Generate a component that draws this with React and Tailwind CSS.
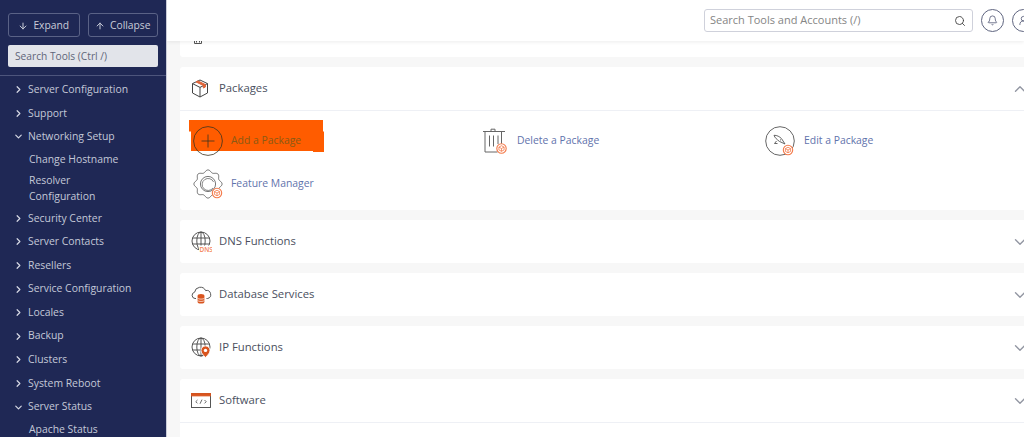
import React from "react";
import { ArrowDown, ArrowUp, ChevronRight, ChevronDown, ChevronUp, Search, Bell, UserRound } from "lucide-react";

const font = { fontFamily: '"Open Sans", sans-serif' };

const navItems = [
  { label: "Server Configuration" },
  { label: "Support" },
  { label: "Networking Setup", open: true, children: ["Change Hostname", "Resolver Configuration"] },
  { label: "Security Center" },
  { label: "Server Contacts" },
  { label: "Resellers" },
  { label: "Service Configuration" },
  { label: "Locales" },
  { label: "Backup" },
  { label: "Clusters" },
  { label: "System Reboot" },
  { label: "Server Status", open: true, children: ["Apache Status"] },
];

// wavy outline for the gear icon
const gearPath =
  Array.from({ length: 97 }, (_, i) => {
    const angle = (i / 96) * Math.PI * 2;
    const radius = 12.9 + 1.2 * Math.cos(angle * 8);
    const x = 15 + radius * Math.cos(angle);
    const y = 15 + radius * Math.sin(angle);
    return `${i === 0 ? "M" : "L"}${x.toFixed(2)} ${y.toFixed(2)}`;
  }).join(" ") + "Z";

function Badge({ x = 22, y = 22 }) {
  return (
    <g transform={`translate(${x} ${y})`} stroke="#f47a4a" fill="#fff" strokeWidth="1.1">
      <circle r="4.7" />
      <path d="M-2.6 -1.4 0 -2.8 2.6 -1.4V1.4L0 2.8-2.6 1.4ZM-2.6 -1.4 0 0 2.6 -1.4M0 0V2.8" fill="none" strokeWidth="0.8" />
    </g>
  );
}

function BoxIcon() {
  return (
    <svg width="18" height="19" viewBox="0 0 18 19" fill="none" stroke="#444" strokeWidth="1">
      <path d="M9 1 16.5 4.6V14L9 18 1.5 14V4.6Z" />
      <path d="M1.5 4.6 9 8.4 16.5 4.6M9 8.4V18" />
      <path d="M5 2.9 12.4 6.6V9L14.4 8V5.6L7 1.9Z" fill="#e0653a" stroke="#e0653a" />
    </svg>
  );
}

function GlobeLines() {
  return (
    <>
      <circle cx="10" cy="10" r="9" />
      <ellipse cx="10" cy="10" rx="4.2" ry="9" />
      <path d="M10 1V19M1.4 7H18.6M1.4 13H18.6" />
    </>
  );
}

function DnsIcon() {
  return (
    <svg width="21" height="21" viewBox="0 0 21 21" fill="none" stroke="#444" strokeWidth="0.9">
      <GlobeLines />
      <rect x="8" y="14.5" width="13" height="6.5" fill="#fff" stroke="none" />
      <text x="8.5" y="20.5" fontSize="6.5" fontWeight="600" fill="#f4845a" stroke="none" style={font}>DNS</text>
    </svg>
  );
}

function DatabaseIcon() {
  return (
    <svg width="21" height="19" viewBox="0 0 21 19" fill="none" stroke="#444" strokeWidth="0.9">
      <path d="M5 13.5H4A3.2 3.2 0 0 1 3.6 7.2 5.8 5.8 0 0 1 14.6 5.6 4 4 0 0 1 16.6 13.5H15.5" />
      <ellipse cx="10" cy="10.5" rx="3.4" ry="1.6" fill="#d9541e" stroke="none" />
      <path d="M6.6 11V17C6.6 18 8 18.6 10 18.6S13.4 18 13.4 17V11Z" fill="#d9541e" stroke="none" />
      <path d="M6.6 13.3C7.5 14.4 12.5 14.4 13.4 13.3M6.6 15.6C7.5 16.7 12.5 16.7 13.4 15.6" stroke="#fff" strokeWidth="0.7" />
    </svg>
  );
}

function IpIcon() {
  return (
    <svg width="21" height="21" viewBox="0 0 21 21" fill="none" stroke="#444" strokeWidth="0.9">
      <GlobeLines />
      <path d="M14.5 20.5C12 17.8 10 16 10 13.4A4.5 4.5 0 0 1 19 13.4C19 16 17 17.8 14.5 20.5Z" fill="#d9541e" stroke="#fff" />
      <circle cx="14.5" cy="13.4" r="1.7" fill="#fff" stroke="none" />
    </svg>
  );
}

function SoftwareIcon() {
  return (
    <svg width="20" height="15" viewBox="0 0 20 15" fill="none" stroke="#444" strokeWidth="0.9">
      <rect x="0.5" y="0.5" width="19" height="14" />
      <rect x="0.5" y="0.5" width="19" height="2.4" fill="#d9541e" stroke="#d9541e" />
      <path d="M6.5 7 4.8 8.7 6.5 10.4M13.5 7 15.2 8.7 13.5 10.4M11 6.6 9 10.8" strokeWidth="0.8" />
    </svg>
  );
}

function PlusIcon() {
  return (
    <svg width="30" height="30" viewBox="0 0 30 30" fill="none" stroke="#3b3320" strokeWidth="0.8">
      <circle cx="15" cy="15" r="14.4" />
      <path d="M15 8.5V21.5M8.5 15H21.5" />
    </svg>
  );
}

function TrashIcon() {
  return (
    <svg width="26" height="26" viewBox="0 0 26 26" fill="none" stroke="#666" strokeWidth="1">
      <path d="M1 3.5H23M9 3.5V1.2H13V3.5" />
      <path d="M3 3.5V24H15.5M19.5 3.5V16" />
      <path d="M7.5 7.5V18.5M11.5 7.5V18.5M16 7.5V16" />
      <Badge x={19.5} y={20.5} />
    </svg>
  );
}

function EditIcon() {
  return (
    <svg width="30" height="30" viewBox="0 0 30 30" fill="none" stroke="#555" strokeWidth="0.9">
      <circle cx="15" cy="15" r="14.3" />
      <path d="M9 9.3C12 9.2 14.5 10.6 16.5 12.6L20 18 14.4 15.4C12 13.5 9.8 11.8 9 9.3Z" />
      <path d="M11.5 15 9.5 17.5 12.5 17.5M15 13.5 16 14.3" />
      <Badge x={23} y={24} />
    </svg>
  );
}

function GearIcon() {
  return (
    <svg width="30" height="30" viewBox="0 0 30 30" fill="none" stroke="#555" strokeWidth="0.8">
      <path d={gearPath} />
      <circle cx="15" cy="15" r="7.6" />
      <path d="M20 19A6 6 0 1 1 20.6 13" strokeWidth="0.7" />
      <Badge x={24} y={24} />
    </svg>
  );
}

function NavRow({ item }) {
  const Chevron = item.open ? ChevronDown : ChevronRight;
  return (
    <>
      <div className="flex h-[23.6px] items-center pl-[13px] text-[10.4px] text-[#c4c8d8]">
        <Chevron size={11} strokeWidth={2.6} className="mr-[4px] shrink-0 text-[#d5d8e4]" />
        <span>{item.label}</span>
      </div>
      {item.children?.map((child) => (
        <div key={child} className="w-[100px] py-[2.45px] pl-[29px] text-[10.4px] leading-[16px] text-[#c4c8d8] box-content">
          {child}
        </div>
      ))}
    </>
  );
}

function Sidebar() {
  return (
    <aside className="flex h-full w-[167px] shrink-0 flex-col overflow-hidden border-r border-[#c9ccd8] bg-[#1f2855]">
      <div className="flex shrink-0 gap-2 px-2 pt-[13px]">
        <button className="flex h-[24px] w-[72px] items-center justify-center gap-[5px] rounded-[3px] border border-[#5a6286] pt-px text-[10.3px] text-[#c9ccd9]">
          <ArrowDown size={10} strokeWidth={2.4} />
          Expand
        </button>
        <button className="flex h-[24px] w-[71px] items-center justify-center gap-[5px] rounded-[3px] border border-[#5a6286] pt-px text-[10.3px] text-[#c9ccd9]">
          <ArrowUp size={10} strokeWidth={2.4} />
          Collapse
        </button>
      </div>
      <div className="mx-2 mt-[8px] flex h-[22px] w-[150px] shrink-0 items-center rounded-[2px] bg-[#e2e4ea] px-[7px] pt-px text-[10.2px] text-[#5f6579]">
        Search Tools (Ctrl /)
      </div>
      <div className="mt-[8px] shrink-0 border-t border-[#4d557c]" />
      <nav className="shrink-0 pt-[2px]">
        {navItems.map((item) => (
          <NavRow key={item.label} item={item} />
        ))}
      </nav>
    </aside>
  );
}

function Header() {
  return (
    <header className="relative z-10 flex h-[41px] shrink-0 items-center bg-white pl-[537px] shadow-[0_1px_4px_rgba(0,0,0,0.08)]">
      <div className="flex h-[23px] w-[269px] shrink-0 items-center justify-between rounded-[3px] border border-[#cfd1db] px-[5px] text-[11px] text-[#858585]">
        <span>Search Tools and Accounts (/)</span>
        <Search size={12} strokeWidth={1.8} className="mr-[1px] text-[#444]" />
      </div>
      <div className="ml-[8px] flex h-[23px] w-[23px] shrink-0 items-center justify-center rounded-full border border-[#5f6580] text-[#3f4666]">
        <Bell size={11} strokeWidth={1.6} />
      </div>
      <div className="ml-[8px] flex h-[23px] w-[23px] shrink-0 items-center justify-center rounded-full border border-[#5f6580] text-[#3f4666]">
        <UserRound size={11} strokeWidth={1.6} />
      </div>
    </header>
  );
}

function SectionHeader({ icon, title, open = false, divider = false }) {
  const Chevron = open ? ChevronUp : ChevronDown;
  return (
    <div className={`flex items-center pl-[11px] ${divider ? "h-[44px] border-b border-[#eef0f5]" : "h-[43px]"}`}>
      <div className="flex w-[28px] shrink-0 items-center">{icon}</div>
      <span className="text-[11.3px] font-medium text-[#4a4f5e]">{title}</span>
      <Chevron size={18} strokeWidth={1.8} className="ml-auto mr-[11px] text-[#9296a2]" />
    </div>
  );
}

function Tool({ icon, label, className = "text-[#5f73ac]", iconWidth = "w-[38px]", width }) {
  return (
    <div className={`flex items-center ${width}`}>
      <div className={`flex shrink-0 items-center ${iconWidth}`}>{icon}</div>
      <span className={`text-[10.4px] ${className}`}>{label}</span>
    </div>
  );
}

function PackagesCard() {
  return (
    <section className="rounded-[3px] bg-white">
      <SectionHeader icon={<BoxIcon />} title="Packages" open divider />
      <div className="relative h-[99px] pl-[13px] pt-[15px]">
        {/* orange scribble over the first tool */}
        <svg className="absolute left-[9px] top-[9px]" width="138" height="33" viewBox="0 0 138 33">
          <path d="M0 0H134V11.5H135V32H124V31H2V11.5H0Z" fill="#ff5c00" />
        </svg>
        <div className="relative flex">
          <Tool icon={<PlusIcon />} label="Add a Package" className="text-[#8a5a14]" width="w-[289px]" />
          <Tool icon={<TrashIcon />} label="Delete a Package" iconWidth="w-[35px]" width="w-[283px]" />
          <Tool icon={<EditIcon />} label="Edit a Package" iconWidth="w-[39px]" />
        </div>
        <div className="relative mt-[13px] flex">
          <Tool icon={<GearIcon />} label="Feature Manager" />
        </div>
      </div>
    </section>
  );
}

export default function App() {
  return (
    <div className="flex h-[437px] w-[1024px] overflow-hidden bg-white" style={font}>
      <Sidebar />
      <div className="flex h-full min-w-0 flex-1 flex-col overflow-hidden">
        <Header />
        <main className="flex w-[880px] flex-1 flex-col gap-[10px] overflow-hidden bg-[#f7f7f7] pl-[13px]">
          <div className="h-[16px] w-[860px] shrink-0 rounded-b-[3px] bg-white pl-[14px]">
            <svg width="8" height="3" viewBox="0 0 8 3" className="block">
              <path d="M0.5 0V2.5H7.5V0M2.5 0V1.5M5.5 0V1.5" fill="none" stroke="#555" strokeWidth="1" />
            </svg>
          </div>
          <div className="flex w-[860px] flex-col gap-[10px]">
            <PackagesCard />
            <section className="rounded-[3px] bg-white">
              <SectionHeader icon={<DnsIcon />} title="DNS Functions" />
            </section>
            <section className="rounded-[3px] bg-white">
              <SectionHeader icon={<DatabaseIcon />} title="Database Services" />
            </section>
            <section className="rounded-[3px] bg-white">
              <SectionHeader icon={<IpIcon />} title="IP Functions" />
            </section>
            <section className="rounded-[3px] bg-white pb-[40px]">
              <SectionHeader icon={<SoftwareIcon />} title="Software" divider />
            </section>
          </div>
        </main>
      </div>
    </div>
  );
}
